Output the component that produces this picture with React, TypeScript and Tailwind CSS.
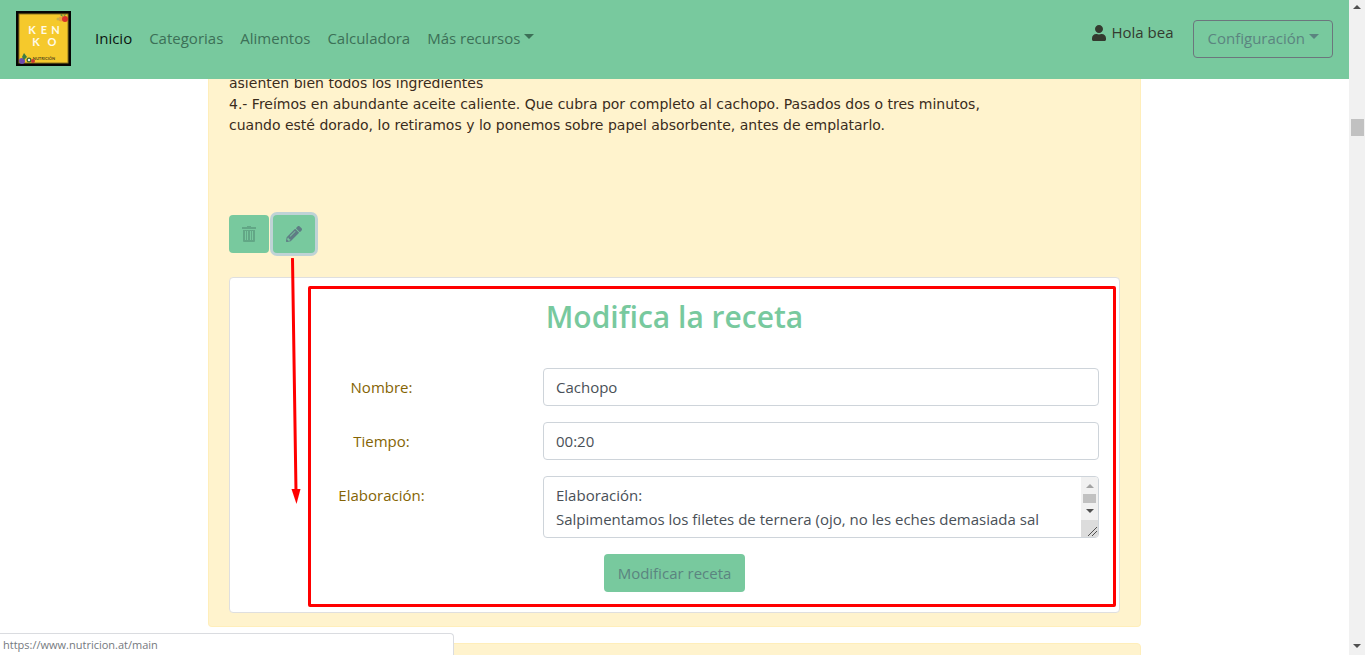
import React from "react";
import { FaUser, FaPencilAlt } from "react-icons/fa";

const navLinks = ["Categorias", "Alimentos", "Calculadora"];

function Logo() {
  return (
    <svg viewBox="0 0 55 55" className="size-[55px]" role="img" aria-label="Kenko Nutrición">
      <rect width="55" height="55" fill="#050505" />
      <rect x="2.500" y="2.500" width="50" height="50" fill="#8a741c" />
      <rect x="3.500" y="3.500" width="48" height="48" fill="#f5c92c" />
      <g fill="#fffbe8" fontFamily="Lato, sans-serif" fontWeight="700" fontSize="11" textAnchor="middle">
        <text x="16" y="23">K</text>
        <text x="28" y="23">E</text>
        <text x="39.500" y="23">N</text>
        <text x="20" y="35">K</text>
        <text x="36" y="35">O</text>
      </g>
      <text x="28" y="49" textAnchor="middle" fontFamily="Lato, sans-serif" fontWeight="700" fontSize="4" fill="#54471a">NUTRICIÓN</text>
      <circle cx="45" cy="8" r="2.500" fill="#e9a13b" />
      <circle cx="49" cy="8" r="3" fill="#d9342b" />
      <circle cx="42" cy="8" r="1.500" fill="#c9b04a" />
      <path d="M44 4l2-1 1 3zM47 4l3-1-1 2z" fill="#5c8a3a" />
      <circle cx="6" cy="50" r="3" fill="#6d4bb0" />
      <path d="M8 42l3 4-3 3-2-3z" fill="#3c7c43" />
      <circle cx="13" cy="49" r="2.500" fill="#3c6a2e" />
      <circle cx="13" cy="49" r="1.200" fill="#eee" />
      <circle cx="17" cy="50" r="2" fill="#c83b35" />
    </svg>
  );
}

function Triangle({ up = false, className = "" }: { up?: boolean; className?: string }) {
  return (
    <svg viewBox="0 0 8 4" className={`h-1 w-2 ${className}`} fill="currentColor" aria-hidden="true">
      <path d={up ? "M0 4h8L4 0z" : "M0 0h8L4 4z"} />
    </svg>
  );
}

function Caret() {
  return (
    <svg viewBox="0 0 10 5" className="mb-1 h-[5px] w-[10px]" fill="currentColor" aria-hidden="true">
      <path d="M0 0h10L5 5z" />
    </svg>
  );
}

function TrashIcon() {
  return (
    <svg viewBox="0 0 14 16" className="h-4 w-[14px]" fill="currentColor" aria-hidden="true">
      <path d="M5 0h4v1h5v2H0V1h5z" />
      <path fillRule="evenodd" d="M1 4h12v11a1 1 0 0 1-1 1H2a1 1 0 0 1-1-1zM3 5v9h1V5zM5 5v9h1V5zM8 5v9h1V5zM10 5v9h1V5z" />
    </svg>
  );
}

function Header() {
  return (
    <header className="z-10 flex h-[79px] flex-none items-center bg-[#78c99e] px-4 pb-[2px]">
      <a href="#inicio" className="mr-6 flex-none"><Logo /></a>
      <nav className="flex flex-1 items-center gap-[17px] text-[15px] text-[#3c7057]">
        <a href="#inicio" className="text-[#0c1410]">Inicio</a>
        {navLinks.map((name) => (
          <a key={name} href={`#${name}`}>{name}</a>
        ))}
        <button type="button" className="flex items-center gap-1">Más recursos <Caret /></button>
      </nav>
      <p className="mr-5 mb-3 flex items-center gap-1 text-[15px] text-[#343a2f]">
        <FaUser className="size-4" /> Hola bea
      </p>
      <button type="button" className="flex h-[38px] items-center gap-1 rounded border border-[#6c757d] px-[13px] text-[15px] text-[#5b8480]">
        Configuración <Caret />
      </button>
    </header>
  );
}

function Row({ id, label, children }: { id: string; label: string; children: React.ReactNode }) {
  return (
    <div className="grid grid-cols-[263fr_556fr] gap-x-[30px]">
      <label htmlFor={id} className="h-[38px] text-center leading-[38px] text-[#856404]">{label}</label>
      {children}
    </div>
  );
}

function RecipeForm() {
  return (
    <form className="relative mt-6 flex flex-col gap-4 rounded border border-[#dfdfdf] bg-white p-5 text-[15px]">
      <h2 className="mb-4 text-center text-[30px] leading-[38px] font-semibold text-[#78c99e]">Modifica la receta</h2>
      <Row id="nombre" label="Nombre:">
        <input id="nombre" defaultValue="Cachopo" className="h-[38px] w-full rounded border border-[#ced4da] px-3 text-[#495057]" />
      </Row>
      <Row id="tiempo" label="Tiempo:">
        <input id="tiempo" defaultValue="00:20" className="h-[38px] w-full rounded border border-[#ced4da] px-3 text-[#495057]" />
      </Row>
      <Row id="elaboracion" label="Elaboración:">
        <div className="flex h-[62px] overflow-hidden rounded border border-[#ced4da]">
          <textarea
            id="elaboracion"
            defaultValue={"Elaboración:\nSalpimentamos los filetes de ternera (ojo, no les eches demasiada sal"}
            className="min-w-0 flex-1 resize-none overflow-hidden px-3 py-[6px] leading-6 text-[#495057]"
          />
          <div className="flex w-[17px] flex-none flex-col items-center bg-[#f1f1f1] pt-[7px] text-[#505050]">
            <Triangle up className="text-[#a3a3a3]" />
            <div className="mt-[6px] mb-[6px] h-[9px] w-[13px] bg-[#c1c1c1]" />
            <Triangle />
            <div className="mt-auto flex h-[17px] w-full items-end justify-end bg-[#dcdcdc]">
              <svg viewBox="0 0 9 9" className="mr-px mb-px size-[9px]" stroke="#505050" aria-hidden="true">
                <path d="M0 9L9 0M4 9L9 4" />
              </svg>
            </div>
          </div>
        </div>
      </Row>
      <button type="button" className="h-[38px] self-center rounded bg-[#78c99e] px-[14px] text-[#5b8480]">Modificar receta</button>
      <div className="pointer-events-none absolute top-2 right-[3px] bottom-[5px] left-[78px] rounded-xs border-3 border-[#ff0000]" />
      <svg viewBox="0 0 12 248" className="pointer-events-none absolute -top-5 left-[60px] h-[248px] w-3" aria-hidden="true">
        <path d="M2.500 1L6 234" stroke="#f00" strokeWidth="3" strokeLinecap="round" />
        <path d="M1.500 231h9L6.500 246z" fill="#f00" />
      </svg>
    </form>
  );
}

function PageScrollbar() {
  return (
    <aside className="flex w-4 flex-none flex-col items-center bg-[#f1f1f1] py-[5px] text-[#505050]" aria-hidden="true">
      <Triangle up />
      <div className="mt-[110px] h-[17px] w-[13px] bg-[#c1c1c1]" />
      <Triangle className="mt-auto mb-[2px]" />
    </aside>
  );
}

export default function App() {
  return (
    <div className="relative flex h-screen overflow-hidden bg-white font-['Open_Sans','Noto_Sans',sans-serif]">
      <div className="flex min-w-0 flex-1 flex-col">
        <Header />
        <main className="mx-auto flex w-full max-w-[933px] flex-1 flex-col gap-4 overflow-hidden">
          <article className="flex-none rounded-b border border-t-0 border-[#ffeeba] bg-[#fff3cd] px-5 pb-[13px]">
            <p className="-mt-[6px] font-['DejaVu_Sans',sans-serif] text-[14px] leading-[21px] text-[#3a2c1c]">
              asienten bien todos los ingredientes
              <br />
              4.- Freímos en abundante aceite caliente. Que cubra por completo al cachopo. Pasados dos o tres minutos,
              <br />
              cuando esté dorado, lo retiramos y lo ponemos sobre papel absorbente, antes de emplatarlo.
            </p>
            <div className="mt-[79px] flex gap-1">
              <button type="button" aria-label="Eliminar receta" className="flex h-[38px] w-10 items-center justify-center rounded bg-[#78c99e] text-[#62a786]">
                <TrashIcon />
              </button>
              <button type="button" aria-label="Modificar receta" className="flex h-[38px] w-[42px] items-center justify-center rounded bg-[#78c99e] text-[#5f7d85] ring-3 ring-[#bfd3d6]">
                <FaPencilAlt className="size-4" />
              </button>
            </div>
            <RecipeForm />
          </article>
          <article className="min-h-10 flex-none rounded-t border border-[#ffeeba] bg-[#fff3cd]" />
        </main>
      </div>
      <PageScrollbar />
      <div className="absolute bottom-0 left-0 z-20 h-[22px] w-[454px] rounded-tr border-t border-r border-[#dadce0] bg-white pl-[3px] text-[11px] leading-[22px] text-[#75797e]">
        https://www.nutricion.at/main
      </div>
    </div>
  );
}
